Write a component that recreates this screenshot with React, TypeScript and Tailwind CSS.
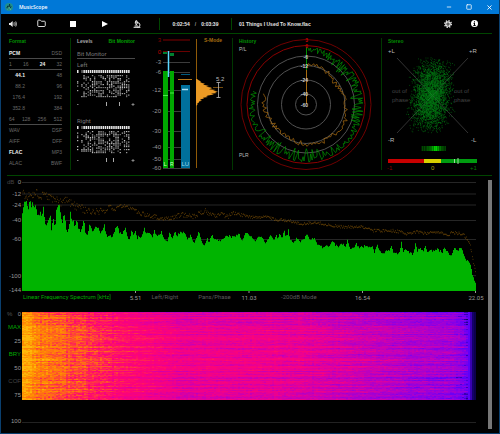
import { ReactNode } from "react"
import { Folder, Microscope, Minus, Square, X } from "lucide-react"

type Point = [number, number]

const createRandom = (seed: number) => () => {
    seed = (seed * 1664525 + 1013904223) % 4294967296
    return seed / 4294967296
}

const interpolate = (points: Point[], x: number) => {
    const next = points.findIndex(([px]) => px >= x)
    if (next === 0) return points[0][1]
    if (next === -1) return points[points.length - 1][1]
    const [x0, y0] = points[next - 1]
    const [x1, y1] = points[next]
    return y0 + ((y1 - y0) * (x - x0)) / (x1 - x0)
}

/* ---------- Title bar and toolbar ---------- */

const TitleBar = () => (
    <header className="flex h-3.5 items-center bg-[#0078d7] pl-1 pr-1.5 text-white">
        <svg viewBox="0 0 14 14" className="mr-1.5 size-2">
            <circle cx="7" cy="7" r="7" fill="#1f8f8f" />
            <path d="M3 9 5 5 6 11 8 2 9 9 11 6" fill="none" stroke="#06343a" strokeWidth="1.5" />
            <path d="M5 12 7 7 10 12" fill="none" stroke="#7fe0a0" />
        </svg>
        <h1 className="text-[5px] font-semibold leading-3 [font-family:'Open_Sans',sans-serif]">MusicScope</h1>
        <div className="ml-auto flex items-center gap-3.5">
            <button aria-label="Minimize"><Minus className="size-[6px]" strokeWidth={3} /></button>
            <button aria-label="Maximize"><Square className="size-[6px]" strokeWidth={3} /></button>
            <button aria-label="Close"><X className="size-[7px]" strokeWidth={3} /></button>
        </div>
    </header>
)

const ToolButton = ({ label, children }: { label: string, children: ReactNode }) => (
    <button aria-label={label} className="flex w-2 justify-center">{children}</button>
)

const Toolbar = () => (
    <div className="ml-1.5 mr-[7px] flex h-5 items-center border-b border-[#004600] text-[#e6e6e6]">
        <div className="pl-0.5 pr-5">
            <ToolButton label="Volume">
                <svg viewBox="0 0 24 18" className="h-[6px] w-2 shrink-0" fill="currentColor">
                    <path d="M0 6h4l7-6v18l-7-6H0z" />
                    <path d="M14 5q3 4 0 8M17 3q5 6 0 12M20 1q7 8 0 16" fill="none" stroke="currentColor" strokeWidth="2" />
                </svg>
            </ToolButton>
        </div>
        <div className="flex items-center gap-6">
            <ToolButton label="Open"><Folder className="size-[9px] shrink-0" strokeWidth={2.5} /></ToolButton>
            <ToolButton label="Stop"><span className="size-[6px] bg-white" /></ToolButton>
            <ToolButton label="Play">
                <svg viewBox="0 0 6 6" className="size-[6px]"><path d="M0 0 6 3 0 6z" fill="#fff" /></svg>
            </ToolButton>
            <ToolButton label="Analyze"><Microscope className="size-2 shrink-0" strokeWidth={3} /></ToolButton>
        </div>
        <div className="ml-[18px] flex h-3 w-[73px] items-center justify-center gap-1 border-x border-[#004600] text-[5px] font-bold leading-3">
            <span>0:02:54</span>
            <span className="px-px text-[#999]">/</span>
            <span>0:03:39</span>
        </div>
        <p className="ml-[7px] text-[5px] font-bold leading-3">01 Things I Used To Know.flac</p>
        <div className="ml-auto flex items-center gap-[18px] pr-3.5">
            <ToolButton label="Settings">
                <svg viewBox="-12 -12 24 24" className="size-2 shrink-0" fill="none" stroke="currentColor">
                    <circle r="6.5" strokeWidth="4" />
                    <circle r="10" strokeWidth="4" strokeDasharray="4 3.85" />
                    <circle r="1.5" strokeWidth="2" />
                </svg>
            </ToolButton>
            <ToolButton label="Info">
                <svg viewBox="0 0 24 24" className="size-[7px] shrink-0">
                    <circle cx="12" cy="12" r="12" fill="#fff" />
                    <path d="M12 4v4M9 11h3v8M8 19h8" stroke="#000" strokeWidth="3.5" />
                </svg>
            </ToolButton>
        </div>
    </div>
)

/* ---------- Format ---------- */

const formatRows = [
    { cells: ["PCM", "DSD"], line: true },
    { cells: ["1", "16", "24", "32"], line: true },
    { cells: ["44.1", "48"], indent: true },
    { cells: ["88.2", "96"], indent: true },
    { cells: ["176.4", "192"], indent: true },
    { cells: ["352.8", "384"], indent: true },
    { cells: ["64", "128", "256", "512"], line: true },
    { cells: ["WAV", "DSF"] },
    { cells: ["AIFF", "DFF"] },
    { cells: ["FLAC", "MP3"] },
    { cells: ["ALAC", "BWF"] },
]
const activeFormats = ["PCM", "24", "44.1", "FLAC"]

const FormatPanel = () => (
    <section className="pl-0.5 pr-2">
        <h2 className="h-2.5 text-[5px] font-bold leading-[6px] text-[#009400]">Format</h2>
        {formatRows.map(({ cells, line, indent }) => (
            <div
                key={cells[0]}
                className={`flex h-[11px] justify-between text-[5px] leading-[11px] ${line ? "border-b border-[#4a4a4a]" : ""}`}
            >
                {cells.map((cell, i) => (
                    <span
                        key={cell}
                        className={`${activeFormats.includes(cell) ? "font-bold text-[#eee]" : "text-[#6a6a6a]"} ${indent && i === 0 ? "w-4 text-right" : ""}`}
                    >
                        {cell}
                    </span>
                ))}
            </div>
        ))}
    </section>
)

/* ---------- Levels ---------- */

const BitMatrix = ({ seed, marks }: { seed: number, marks: number[] }) => {
    const random = createRandom(seed)
    const bits: ReactNode[] = []
    for (let col = 0; col < 25; col++) {
        if (col === 1) continue
        const x = col * 2.13
        bits.push(<rect key={col} x={x} y="0" width="1.5" height="3" fill={col === 2 ? "#666" : "#e8e8e8"} />)
        for (let row = 0; row < 15; row++) {
            const level = random()
            if (level < 0.42 || (col < 4 && level < 0.7)) continue
            bits.push(
                <rect key={`${col}-${row}`} x={x} y={5 + row * 1.5} width="1.3" height="1.2" fill="#fff" opacity={0.15 + level * 0.65} />
            )
        }
    }
    return (
        <svg viewBox="0 0 58 40" className="block w-full">
            {bits}
            <path d="M0 34.500h1.500M54.500 34.500h3M56 33v3" stroke="#999" strokeWidth=".8" />
            {marks.map((x) => <path key={x} d={`M${x} 32v4`} stroke="#aaa" />)}
        </svg>
    )
}

const LevelsPanel = () => (
    <section className="border-l border-[#003800] pl-1.5 pr-4 text-[6px] leading-[6px] text-[#777] [font-family:Roboto,sans-serif]">
        <div className="flex h-2.5 justify-between text-[5px] font-bold [font-family:'Liberation_Sans',sans-serif]">
            <button className="flex text-[#aaa]">Levels</button>
            <button className="flex whitespace-nowrap text-[#00a000]">Bit Monitor</button>
        </div>
        <h2 className="h-[11px] border-b border-[#4a4a4a] leading-[11px]">Bit Monitor</h2>
        <h3 className="h-[11px] leading-[11px]">Left</h3>
        <BitMatrix seed={11} marks={[29.5, 42.5]} />
        <h3 className="mt-[5px] h-[11px] leading-[11px]">Right</h3>
        <BitMatrix seed={29} marks={[29.5, 36.5]} />
    </section>
)

/* ---------- Meters ---------- */

const meterScale: [string, number][] = [
    ["-3", 62], ["-6", 72], ["-12", 90], ["-20", 111], ["-30", 131], ["-40", 147], ["-50", 159], ["-60", 168],
]

const histogram = [1, 2, 3, 5, 4, 6, 9, 7, 10, 13, 10, 15, 16, 13, 20, 17, 22, 19, 21, 15, 18, 12, 10, 12, 7, 8, 5, 4, 6, 3, 3, 1, 2, 1]

const MeterPanel = () => (
    <svg viewBox="151 38 81 132" className="block w-full" fontSize="6">
        <path d="M163 40h27" stroke="#400000" strokeWidth="2" />
        <path d="M163 51.500h27" stroke="#6a0000" />
        <text x="161" y="42" textAnchor="end" fill="#800000">3</text>
        <text x="161" y="54" textAnchor="end" fill="#c00000">0</text>
        {meterScale.map(([label, y]) => (
            <g key={label}>
                <path d={`M163 ${y + 0.5}h27`} stroke="#3c3c3c" />
                <text x="161" y={y + 2} textAnchor="end" fill="#999">{label}</text>
            </g>
        ))}
        <path d="M163 71h5v97h-5zM170 71h4v97h-4z" fill="#00a800" />
        <path d="M163 52h4v2h-4zM170 53h4v3h-4z" fill="#008030" />
        <path d="M163 95.500h5M170 93h4" stroke="#4be84b" />
        <path d="M168.500 51v26" stroke="#5cd8ff" strokeWidth="1.500" />
        <path d="M181 85h9v83h-9z" fill="#00709c" />
        <path d="M182 89.500h6" stroke="#a8dff5" strokeWidth="1.500" />
        <path d="M181 74.500h9" stroke="#005a80" />
        <path d="M178 79.500h14" stroke="#b87818" />
        <text x="163.500" y="166" fill="#cfc">L</text>
        <text x="170" y="166" fontSize="5" fill="#cfc">R</text>
        <text x="181.500" y="166" fill="#9cd5ea">LU</text>

        <path d="M196.500 39v129" stroke="#8f5a08" />
        <path
            d={`M196 79 ${histogram.map((width, i) => `L${196 + width} ${79 + i * 0.78}`).join(" ")} L196 106z`}
            fill="#eb9a24"
        />
        <path d="M213 87.500h10" stroke="#a86c10" strokeWidth=".7" />
        <path d="M218.500 82.500v15M216.500 82.500h4M216.500 97.500h4" stroke="#bbb" strokeWidth=".8" />
        <text x="216" y="81" fontSize="6" fill="#bbb">5.2</text>
        <text x="204" y="42" fontSize="5" fontWeight="bold" fill="#a86c10">S-Mode</text>
    </svg>
)

/* ---------- History ---------- */

const polar = (angle: number, radius: number) => {
    const rad = (angle * Math.PI) / 180
    return `${(306 + Math.sin(rad) * radius).toFixed(1)} ${(104.5 - Math.cos(rad) * radius).toFixed(1)}`
}

const peakTrace = () => {
    const random = createRandom(5)
    const quiet: Point[] = [[0, 1], [25, 4], [40, 9], [60, 11], [100, 8], [125, 2], [150, 5], [175, 10], [200, 9], [235, 7], [255, 2], [285, 4]]
    const points: string[] = []
    for (let angle = 2; angle <= 284; angle += 1.2) {
        points.push(polar(angle, 57.5 - Math.pow(random(), 1.3) * (interpolate(quiet, angle) + 4)))
    }
    return `M${points.join("L")}`
}

const loudnessTrace = () => {
    const random = createRandom(17)
    const base: Point[] = [[0, 36], [4, 40], [20, 41], [50, 36], [70, 38], [90, 40], [115, 43], [140, 41], [170, 40], [200, 38], [240, 38], [260, 41], [286, 43]]
    const points: string[] = []
    for (let angle = 1; angle <= 286; angle += 2.4) {
        points.push(polar(angle, interpolate(base, angle) + (random() - 0.5) * 5))
    }
    return `M${points.join("L")}`
}

const historyScale: [string, number][] = [["-6", 57], ["-12", 66], ["-24", 80], ["-40", 94], ["-60", 104.5]]

const HistoryPanel = () => (
    <svg viewBox="233 38 148 132" className="block w-full border-l border-[#003800]" fontSize="5">
        <g fill="none">
            <g stroke="#5a5a5a" strokeWidth=".9">
                <circle cx="306" cy="104.500" r="10.500" />
                <circle cx="306" cy="104.500" r="24.500" />
                <circle cx="306" cy="104.500" r="39" />
                <circle cx="306" cy="104.500" r="48.500" />
            </g>
            <circle cx="306" cy="104.500" r="59" stroke="#8c0000" />
            <circle cx="306" cy="104.500" r="65" stroke="#700000" />
            <path d={peakTrace()} stroke="#009400" strokeWidth=".7" />
            <path d={loudnessTrace()} stroke="#b07010" strokeWidth=".7" />
            <path d="M306.500 80V47" stroke="#008f00" />
            <path d="M306.500 104V70" stroke="#a86c10" />
        </g>
        <g textAnchor="end" fontWeight="bold">
            <text x="308" y="42" fill="#c00000">3</text>
            <text x="308" y="48" fill="#c00000">0</text>
            {historyScale.map(([label, y]) => <text key={label} x="308" y={y + 2} fill="#ccc">{label}</text>)}
        </g>
        <text x="239" y="43" fontWeight="bold" fill="#009400">History</text>
        <text x="239" y="51" fill="#bbb">P/L</text>
        <text x="239" y="157" fill="#bbb">PLR</text>
    </svg>
)

/* ---------- Stereo ---------- */

const stereoCloud = () => {
    const random = createRandom(41)
    let d = ""
    for (let i = 0; i < 3200; i++) {
        const spread = random() + random() + random() - 1.5
        const drop = (random() + random() * 0.8 - 0.9) * 42
        const shift = -drop * 0.08
        d += `M${(431 + shift + spread * 17).toFixed(1)} ${(95 + drop).toFixed(1)}h.7`
    }
    return d
}

const phaseBars = [30, 80, 50, 100, 60, 90, 140, 110, 170, 130, 230, 150, 240, 200, 240, 170, 220, 120, 180, 90, 140, 60, 100]

const StereoPanel = () => (
    <svg viewBox="382 38 110 132" className="block w-full border-l border-[#003800]" fontSize="6">
        <path d="M397 58 468 133M468 58 397 133" stroke="#333" />
        <path d={stereoCloud()} stroke="#00a81c" strokeWidth=".8" opacity=".7" />
        <text x="388" y="43" fontSize="5" fontWeight="bold" fill="#008c00">Stereo</text>
        <g fill="#bbb">
            <text x="388" y="53">+L</text>
            <text x="469" y="53">+R</text>
            <text x="388" y="142">-R</text>
            <text x="471" y="142">-L</text>
        </g>
        <g fill="#444">
            <text x="392" y="93">out of</text>
            <text x="392" y="102">phase</text>
            <text x="454" y="93">out of</text>
            <text x="454" y="102">phase</text>
        </g>
        {phaseBars.map((green, i) => (
            <rect key={i} x={421 + i * 1.08} y="146" width=".9" height="5" fill={`rgb(0 ${green} 0)`} />
        ))}
        <path d="M388 159h36v4h-36z" fill="#c80000" />
        <path d="M424 159h17v4h-17z" fill="#d8d000" />
        <path d="M441 159h36v4h-36z" fill="#009c10" />
        <path d="M454.500 159v4M458 158v6" stroke="#9fd69f" />
        <text x="387" y="170" fill="#900000">-1</text>
        <text x="431" y="170" fill="#b0a800">0</text>
        <text x="470" y="170" fill="#007c00">+1</text>
    </svg>
)

/* ---------- Spectrum ---------- */

const spectrum: Point[] = [
    [66, 120], [72, 80], [78, 82], [84, 105], [88, 78], [93, 98], [97, 84], [101, 102], [106, 90], [110, 118], [116, 128],
    [120, 115], [124, 130], [129, 100], [134, 150], [138, 155], [145, 132], [150, 122], [153, 165], [159, 135], [164, 168],
    [168, 110], [172, 98], [178, 92], [181, 125], [185, 155], [190, 116], [195, 140], [200, 180], [206, 160], [210, 115],
    [215, 145], [218, 130], [222, 160], [230, 135], [234, 165], [240, 170], [245, 165], [250, 135], [256, 180], [262, 185],
    [268, 145], [272, 165], [278, 172], [285, 160], [295, 162], [300, 175], [308, 170], [311, 138], [314, 170], [320, 190],
    [330, 180], [335, 195], [343, 170], [352, 150], [357, 175], [365, 182], [370, 170], [375, 158], [380, 188], [388, 195],
    [394, 165], [400, 190], [404, 165], [410, 195], [416, 185], [422, 195], [432, 160], [437, 180], [445, 178], [455, 190],
    [462, 165], [468, 185], [484, 174], [490, 195], [500, 205], [508, 175], [515, 195], [523, 172], [530, 185], [538, 175],
    [545, 180], [553, 172], [560, 195], [570, 185], [580, 205], [590, 190], [595, 168], [602, 195], [612, 218], [620, 190],
    [626, 205], [634, 180], [640, 195], [660, 200], [680, 185], [700, 190], [715, 178], [725, 200], [737, 175], [750, 185],
    [765, 200], [772, 190], [786, 192], [795, 210], [810, 185], [820, 200], [828, 180], [832, 195], [838, 175], [845, 190],
    [852, 172], [857, 190], [864, 170], [870, 200], [880, 205], [890, 190], [900, 205], [910, 195], [920, 180], [930, 200],
    [942, 190], [950, 210], [965, 220], [975, 215], [985, 218], [996, 203], [1005, 212], [1015, 220], [1025, 210],
    [1035, 215], [1041, 198], [1047, 220], [1057, 225], [1068, 210], [1078, 222], [1095, 215], [1105, 222], [1115, 215],
    [1122, 235], [1132, 212], [1138, 235], [1154, 235], [1168, 228], [1174, 215], [1180, 235], [1190, 240], [1198, 235],
    [1203, 200], [1208, 235], [1215, 225], [1230, 238], [1240, 240], [1244, 205], [1250, 230], [1260, 220], [1268, 235],
    [1275, 215], [1280, 235], [1310, 225], [1325, 235], [1332, 222], [1352, 245], [1362, 222], [1372, 230], [1380, 220],
    [1390, 240], [1400, 260], [1408, 270], [1413, 285], [1417, 310], [1426, 325],
]

const peakHold: Point[] = [
    [66, 60], [90, 68], [105, 56], [120, 64], [150, 72], [180, 84], [200, 80], [215, 88], [240, 104], [265, 108], [300, 110],
    [315, 116], [325, 97], [340, 106], [360, 96], [385, 98], [405, 112], [430, 120], [460, 128], [490, 132], [515, 131],
    [545, 122], [580, 128], [615, 110], [640, 126], [665, 120], [680, 128], [700, 117], [725, 123], [750, 130], [800, 130],
    [830, 138], [870, 140], [900, 149], [950, 146], [1000, 155], [1030, 160], [1080, 158], [1120, 170], [1180, 170],
    [1220, 179], [1250, 174], [1280, 178], [1310, 174], [1345, 182], [1360, 175], [1385, 180], [1398, 190], [1410, 215],
    [1420, 270], [1426, 295],
]

const spectrumArea = () => {
    const random = createRandom(3)
    let d = "M66 351"
    for (let x = 66; x < 1428; x += 3) {
        const y = interpolate(spectrum, x) + (random() - 0.5) * 8
        d += `V${y.toFixed(0)}H${x + 3}`
    }
    return `${d}V351z`
}

const peakDots = () => {
    const random = createRandom(8)
    let d = ""
    for (let x = 68; x < 1428; x += 2) {
        const scatter = x < 300 ? 24 : x < 700 ? 14 : 9
        const y = interpolate(peakHold, x) + (random() - 0.5) * scatter
        d += `M${x} ${y.toFixed(0)}h2`
    }
    return d
}

const SpectrumChart = () => (
    <svg viewBox="66 18 1362 339" preserveAspectRatio="none" className="block h-[113px] w-full">
        <path d="M66 25.500H1428M66 60H1428M66 93H1428M66 139.500H1428M66 196.500H1428M66 305H1428" stroke="#262626" strokeWidth="3" />
        <path d={spectrumArea()} fill="#00b400" />
        <path d={peakDots()} stroke="#8a5a08" strokeWidth="2.500" />
        <path d="M406.500 351v6M747 351v6M1087.500 351v6M1426.500 351v6" stroke="#999" strokeWidth="3" />
    </svg>
)

const levelAxis: [string, number][] = [["0", 182], ["-12", 194], ["-24", 205], ["-40", 220], ["-60", 239], ["-100", 276], ["-144", 290]]

const Tick = ({ children }: { children: ReactNode }) => (
    <span className="-mr-2 ml-auto w-4 pt-px text-center text-[#999]">{children}</span>
)

const SpectrumSection = () => (
    <section className="flex">
        <svg viewBox="7 180 15 113" className="h-[113px] w-[15px] shrink-0 overflow-visible" fontSize="6">
            <text x="7" y="184" fill="#444">dB</text>
            <g textAnchor="end" fill="#999">
                {levelAxis.map(([label, y]) => <text key={label} x="21" y={y + 2}>{label}</text>)}
            </g>
        </svg>
        <div className="min-w-0 flex-1">
            <SpectrumChart />
            <div className="grid h-2 grid-cols-4 whitespace-nowrap pt-px text-[6px] leading-[6px] text-[#5c5c5c] [font-family:Roboto,sans-serif]">
                <div className="flex items-start pl-px">
                    <button className="flex text-[#00a800]">Linear Frequency Spectrum [kHz]</button>
                    <Tick>5.51</Tick>
                </div>
                <div className="flex items-start pl-4">
                    <button className="flex">Left/Right</button>
                    <button className="ml-5 flex">Pans/Phase</button>
                    <Tick>11.03</Tick>
                </div>
                <div className="flex items-start pl-8">
                    <button className="flex">-200dB Mode</button>
                    <Tick>16.54</Tick>
                </div>
                <div className="flex items-start">
                    <Tick>22.05</Tick>
                </div>
            </div>
        </div>
    </section>
)

/* ---------- Spectrogram ---------- */

const heatStops = [
    [0, 0, 0, 16], [0.08, 20, 0, 110], [0.18, 95, 0, 250], [0.28, 145, 0, 225], [0.4, 195, 0, 185],
    [0.5, 235, 0, 145], [0.6, 255, 5, 115], [0.7, 255, 50, 70], [0.8, 255, 110, 20], [0.9, 255, 145, 0], [1, 255, 185, 10],
]

const heatColor = (value: number) => {
    const channels = [1, 2, 3].map((c) => Math.round(interpolate(heatStops.map((s) => [s[0], s[c]] as Point), value)))
    return `rgb(${channels.join(" ")})`
}

const HEAT_LEVELS = 40
const heatProfile: Point[] = [
    [0, 0.98], [8, 0.92], [14, 0.85], [30, 0.8], [50, 0.74], [70, 0.68], [90, 0.62], [120, 0.57], [160, 0.5], [230, 0.5],
    [280, 0.48], [340, 0.41], [390, 0.35], [430, 0.31], [442, 0.24], [447, 0.16], [451, 0.06], [454, 0.03],
]

const heatPaths = () => {
    const random = createRandom(77)
    const paths: string[] = Array(HEAT_LEVELS).fill("")
    const columns = Array.from({ length: 227 }, () => random() - 0.5)
    for (let row = 0; row < 88; row++) {
        const rowBias = row === 0 ? -0.12 : (random() - 0.5) * 0.12 + Math.sin(row / 14 - 1.5) * 0.025
        let drift = 0
        for (let col = 0; col < 227; col++) {
            const x = col * 2
            const grain = x < 95 ? 0.13 : 0.06
            drift = drift * 0.8 + (random() - 0.5) * 0.045
            const value = interpolate(heatProfile, x)
                + (x > 444 ? 0 : rowBias + drift + (random() - 0.5) * grain + columns[col] * (x < 95 ? 0.07 : 0.02))
            const level = Math.max(0, Math.min(HEAT_LEVELS - 1, Math.round(value * (HEAT_LEVELS - 1))))
            paths[level] += `M${x} ${row}h2v1h-2z`
        }
    }
    return paths
}

const Spectrogram = () => (
    <svg viewBox="0 0 454 88" preserveAspectRatio="none" shapeRendering="crispEdges" className="block h-[88px] w-full">
        {heatPaths().map((d, level) => <path key={level} d={d} fill={heatColor(level / (HEAT_LEVELS - 1))} />)}
    </svg>
)

const modes = [
    { label: "MAX", next: "25", active: true },
    { label: "BRY", next: "50", active: true },
    { label: "COF", next: "75", active: false },
]

const SpectrogramSection = () => (
    <section className="flex pt-2.5">
        <div className="flex w-[15px] shrink-0 flex-col items-end pr-px text-[6px] leading-[6px] text-[#999]">
            <div className="flex w-full justify-between">
                <span className="text-[#555]">%</span>
                <span>0</span>
            </div>
            {modes.map(({ label, next, active }) => (
                <div key={label} className="flex flex-col items-end">
                    <button className={`mt-[7px] flex ${active ? "text-[#00a800]" : "text-[#444]"}`}>{label}</button>
                    <span className="mt-2">{next}</span>
                </div>
            ))}
            <span className="mt-5">100</span>
        </div>
        <div className="min-w-0 flex-1 pt-px">
            <Spectrogram />
            <div className="h-[23px] border-b border-[#222]" />
        </div>
    </section>
)

const App = () => (
    <main className="flex min-h-screen flex-col border-x border-b border-[#0a3f6e] bg-black [font-family:'Liberation_Sans',Arial,sans-serif]">
        <TitleBar />
        <Toolbar />
        <div className="ml-1.5 mr-[7px] grid grid-cols-[63fr_81fr_81fr_149fr_111fr] border-b border-[#004600] pb-[5px] pt-1">
            <FormatPanel />
            <LevelsPanel />
            <MeterPanel />
            <HistoryPanel />
            <StereoPanel />
        </div>
        <div className="mb-1 ml-1.5 mr-[7px] mt-1 flex flex-1 gap-3">
            <div className="min-w-0 flex-1">
                <SpectrumSection />
                <SpectrogramSection />
            </div>
            <div className="w-1 bg-[#777]" />
        </div>
    </main>
)

export default App
